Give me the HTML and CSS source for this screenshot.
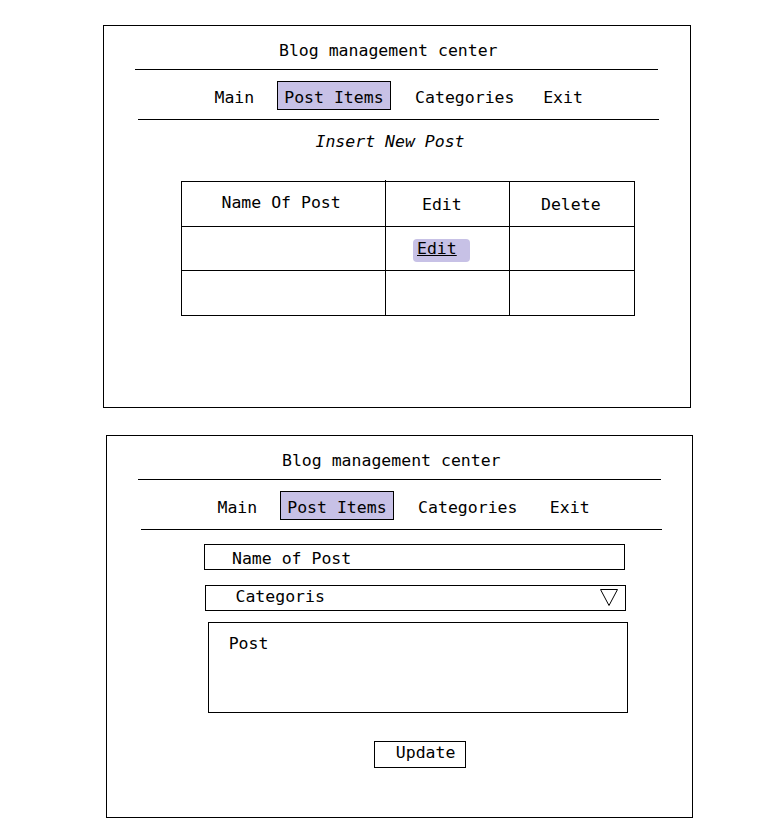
FILE: index.html
```html
<!DOCTYPE html>
<html lang="en">
<head>
<meta charset="utf-8">
<title>Blog management center</title>
<link rel="stylesheet" href="styles.css">
</head>
<body>
<div class="page">
  <section class="panel panel-list">
    <h1 class="title">Blog management center</h1>
    <hr class="rule rule-top">
    <nav class="nav">
      <a class="nav-item nav-main">Main</a>
      <a class="nav-item active">Post Items</a>
      <a class="nav-item nav-cat">Categories</a>
      <a class="nav-item nav-exit">Exit</a>
    </nav>
    <hr class="rule rule-bottom">
    <p class="insert">Insert New Post</p>
    <div class="grid">
      <div class="cell head-name">Name Of Post</div>
      <div class="cell head-edit">Edit</div>
      <div class="cell head-delete">Delete</div>
      <div class="cell"></div>
      <div class="cell cell-edit"><a class="edit-link">Edit</a></div>
      <div class="cell"></div>
      <div class="cell"></div>
      <div class="cell"></div>
      <div class="cell"></div>
    </div>
  </section>

  <section class="panel panel-form">
    <h1 class="title">Blog management center</h1>
    <hr class="rule rule-top">
    <nav class="nav">
      <a class="nav-item nav-main">Main</a>
      <a class="nav-item active">Post Items</a>
      <a class="nav-item nav-cat">Categories</a>
      <a class="nav-item nav-exit nav-exit-wide">Exit</a>
    </nav>
    <hr class="rule rule-bottom">
    <div class="field field-name">Name of Post</div>
    <div class="field field-cat">
      <span>Categoris</span>
      <svg class="tri" width="18" height="17" viewBox="0 0 18 17"><polygon points="0.5,0.5 17.5,0.5 9,16.5" fill="none" stroke="#000" stroke-width="1"/></svg>
    </div>
    <div class="field-post">Post</div>
    <button class="btn" type="button">Update</button>
  </section>
</div>
</body>
</html>
```

FILE: styles.css
```css
* {
  box-sizing: border-box;
  margin: 0;
  padding: 0;
}

body {
  font-family: "DejaVu Sans Mono", "Liberation Mono", monospace;
  font-size: 16.5px;
  line-height: 20px;
  color: #000;
  background: #fff;
}

.page {
  display: flex;
  flex-direction: column;
  align-items: flex-start;
  padding-top: 25px;
}

.panel {
  width: 588px;
  height: 383px;
  border: 1px solid #000;
}

.panel-list {
  margin-left: 103px;
}

.panel-form {
  margin-left: 106px;
  margin-top: 27px;
  width: 587px;
}

.title {
  font-size: 16.5px;
  font-weight: normal;
  line-height: 20px;
  margin-top: 15px;
  padding-left: 175px;
}

.rule {
  border: 0;
  height: 1px;
  background: #000;
}

.rule-top {
  margin: 8px 0 0 31px;
  width: 523px;
}

.rule-bottom {
  margin: 9px 0 0 34px;
  width: 521px;
}

.nav {
  display: flex;
  align-items: baseline;
  margin: 11px 0 0 110.5px;
}

.nav-item {
  color: #000;
  text-decoration: none;
  white-space: pre;
}

.nav-main {
  margin-right: 23px;
}

.nav-item.active {
  background: #c7c1e6;
  border: 1px solid #000;
  padding: 5.5px 6px 1.5px 6px;
  margin-right: 24.5px;
}

.nav-exit {
  margin-left: 28.7px;
}

.nav-exit-wide {
  margin-left: 32.4px;
}

.insert {
  font-style: italic;
  margin: 12px 0 0 211.5px;
}

.grid {
  display: grid;
  grid-template-columns: 204px 124px 125px;
  grid-template-rows: 45px 44px 45px;
  width: 454px;
  margin: 29px 0 0 77px;
  border-left: 1px solid #000;
  border-top: 1px solid #000;
}

.cell {
  border-right: 1px solid #000;
  border-bottom: 1px solid #000;
  white-space: pre;
}

.head-name {
  position: relative;
  padding: 10.8px 0 0 39.5px;
}

.head-name::after {
  content: "";
  position: absolute;
  right: -1px;
  top: -2px;
  width: 1px;
  height: 1px;
  background: #000;
}

.head-edit {
  padding: 12.8px 0 0 36px;
}

.head-delete {
  padding: 12.8px 0 0 31px;
}

.cell-edit {
  padding: 12px 0 0 27px;
}

.edit-link {
  display: inline-block;
  vertical-align: top;
  color: #000;
  background: #c7c1e6;
  border-radius: 4px;
  padding: 0 13.3px 3px 4px;
  text-decoration: underline;
}

.field {
  width: 421px;
  height: 26px;
  border: 1px solid #000;
}

.field-name {
  margin: 14px 0 0 97px;
  padding: 3.8px 0 0 27px;
}

.field-cat {
  display: flex;
  justify-content: space-between;
  align-items: flex-start;
  margin: 15px 0 0 98px;
  padding: 0.8px 7px 0 29.5px;
}

.tri {
  display: block;
  margin-top: 2.2px;
}

.field-post {
  width: 420px;
  height: 91px;
  border: 1px solid #000;
  margin: 11px 0 0 101px;
  padding: 11px 0 0 19.7px;
}

.btn {
  display: block;
  width: 92px;
  height: 27px;
  margin: 28px 0 0 267px;
  border: 1px solid #000;
  background: #fff;
  color: #000;
  font: inherit;
  line-height: 20px;
  text-align: left;
  padding: 1px 0 3.4px 20.8px;
}
```
